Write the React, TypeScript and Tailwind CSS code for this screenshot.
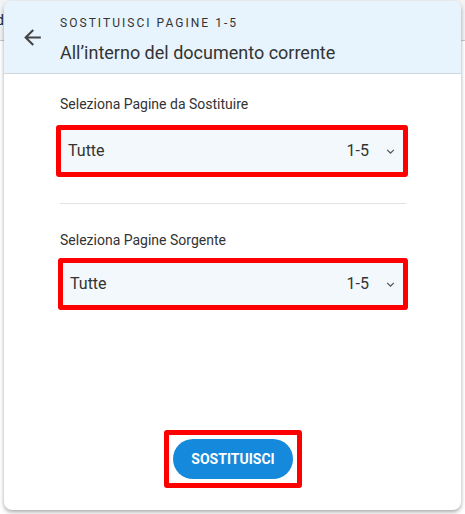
import React from "react";

function Chevron() {
  return (
    <svg width="15" height="15" viewBox="0 0 24 24" className="text-[#555]">
      <path d="M7.4 8.6 12 13.2l4.6-4.6L18 10l-6 6-6-6z" fill="currentColor" />
    </svg>
  );
}

function Select({ className }: { className: string }) {
  return (
    <div className={`h-[52px] rounded-[3px] border-[5px] border-[#ff0000] bg-[#f3f8fc] flex items-center pl-[7px] pr-[5px] ${className}`}>
      <span className="text-[16px] text-[#333]">Tutte</span>
      <span className="ml-auto text-[16px] text-[#333]">1-5</span>
      <span className="ml-[14px] flex items-center"><Chevron /></span>
    </div>
  );
}

export default function App() {
  return (
    <div className="relative w-[465px] h-[514px] bg-white overflow-hidden" style={{ fontFamily: "Roboto, 'Liberation Sans', sans-serif" }}>
      <div className="h-[41px] bg-[#f1f3f5] border-b border-[#c8c8c8] flex items-center">
        <span className="text-[14px] text-[#222] -ml-[4px]">d</span>
      </div>
      <div className="absolute left-[4px] top-[1px] w-[457px] h-[509px] rounded-[8px] bg-white shadow-[0_2px_4px_rgba(0,0,0,0.35)] flex flex-col overflow-hidden">
        <div className="h-[73px] shrink-0 bg-[#e7f3fd] border-b border-[#cfd8df] flex items-center">
          <div className="w-[56px] flex justify-center pl-[1px] pt-[1px]">
            <svg width="25" height="25" viewBox="0 0 24 24" className="text-[#444]">
              <path d="M20 11H7.83l5.59-5.59L12 4l-8 8 8 8 1.41-1.41L7.83 13H20v-2z" fill="currentColor" />
            </svg>
          </div>
          <div className="flex flex-col pt-[4px]">
            <span className="text-[12px] leading-[16px] tracking-[0.17em] text-[#333]">SOSTITUISCI PAGINE 1-5</span>
            <span className="mt-[11px] text-[18px] leading-[22px] text-[#333]">All’interno del documento corrente</span>
          </div>
        </div>
        <div className="flex flex-col pl-[52px] pr-[53px] flex-1">
          <span className="mt-[20px] ml-[4px] text-[14px] leading-[20px] text-[#333]">Seleziona Pagine da Sostituire</span>
          <Select className="mt-[11px]" />
          <div className="mt-[26px] ml-[4px] mr-[2px] h-px bg-[#e2e2e2]" />
          <span className="mt-[26px] ml-[4px] text-[14px] leading-[20px] text-[#333]">Seleziona Pagine Sorgente</span>
          <Select className="mt-[8px] ml-[2px]" />
          <div className="mt-auto mb-[22px] flex justify-center">
            <div className="rounded-[3px] border-[5px] border-[#ff0000] p-[4px] ml-[2px]">
              <button className="w-[120px] h-[40px] rounded-full bg-[#1589db] text-white text-[14px] font-bold">
                SOSTITUISCI
              </button>
            </div>
          </div>
        </div>
      </div>
    </div>
  );
}
